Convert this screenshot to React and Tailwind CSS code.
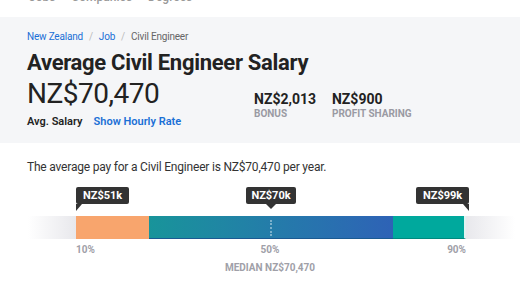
export default function App() {
  return (
    <div className="w-[520px] h-[290px] overflow-hidden bg-white text-[#222]" style={{ fontFamily: 'Roboto, "Liberation Sans", sans-serif' }}>
      {/* Top nav, cut off */}
      <div className="h-[17px] overflow-hidden bg-white">
        <div className="flex gap-[16px] pl-[29px] -mt-[9px] text-[12px] leading-[13px] font-medium text-[#999]">
          <span>Jobs</span>
          <span>Companies</span>
          <span>Degrees</span>
        </div>
      </div>

      {/* Header */}
      <div className="h-[126px] bg-[#f5f6f8] px-[27px] pt-[13px]">
        <div className="flex items-center gap-[6px] text-[10px] leading-[14px] tracking-[-0.2px]">
          <span className="text-[#1a6fd6]">New Zealand</span>
          <span className="text-[#bbb]">/</span>
          <span className="text-[#1a6fd6]">Job</span>
          <span className="text-[#bbb]">/</span>
          <span className="text-[#666]">Civil Engineer</span>
        </div>
        <h1 className="mt-[6px] text-[22px] leading-[26px] font-bold tracking-[-0.3px] text-[#222]">Average Civil Engineer Salary</h1>
        <div className="flex items-end">
          <div className="w-[227px] shrink-0">
            <div className="mt-[1px] text-[28px] leading-[34px] tracking-[-0.5px] text-[#222]">NZ$70,470</div>
            <div className="mt-[3px] flex gap-[11px] text-[11px] leading-[16px] font-semibold">
              <span className="text-[#222]">Avg. Salary</span>
              <span className="text-[#1a6fd6]">Show Hourly Rate</span>
            </div>
          </div>
          <div className="mb-[10px] flex gap-[16px]">
            <div>
              <div className="text-[14px] leading-[16px] font-bold text-[#222]">NZ$2,013</div>
              <div className="text-[10px] leading-[13px] font-bold text-[#9a9aa3]">BONUS</div>
            </div>
            <div>
              <div className="text-[14px] leading-[16px] font-bold text-[#222]">NZ$900</div>
              <div className="text-[10px] leading-[13px] font-bold text-[#9a9aa3]">PROFIT SHARING</div>
            </div>
          </div>
        </div>
      </div>

      {/* Distribution */}
      <div className="pt-[16px]">
        <p className="pl-[27px] text-[12px] leading-[16px] tracking-[-0.2px] text-[#333]">
          The average pay for a Civil Engineer is NZ$70,470 per year.
        </p>

        <div className="relative mt-[41px] ml-[28px] flex h-[23px] w-[487px]">
          <div className="w-[48px] bg-gradient-to-r from-white to-[#e8e8ec]" />
          <div className="w-[73px] bg-[#f8a56d]" />
          <div className="w-[244px] bg-gradient-to-r from-[#18949a] to-[#2e62b6] border-b border-[#1b5a92]" />
          <div className="w-[73px] bg-[#00a99d] border-b border-[#00897f] border-r-2 border-r-[#dff3f1]" />
          <div className="w-[49px] bg-gradient-to-r from-[#e8e8ec] to-white" />
          <div className="absolute left-[242px] top-[4px] h-[16px] border-l-2 border-dotted border-white/40" />

          {/* Tooltips */}
          <div className="absolute left-[48px] -top-[29px] rounded-[2px] bg-[#333] px-[7px] text-[11px] leading-[17px] font-bold text-white">
            NZ$51k
            <span className="absolute left-0 top-full h-0 w-0 border-t-[7px] border-r-[6px] border-t-[#333] border-r-transparent" />
          </div>
          <div className="absolute left-[218px] -top-[29px] w-[50px] rounded-[2px] bg-[#333] text-center text-[11px] leading-[17px] font-bold text-white">
            NZ$70k
            <span className="absolute left-[20px] top-full h-0 w-0 border-t-[5px] border-x-[5px] border-t-[#333] border-x-transparent" />
          </div>
          <div className="absolute left-[388px] -top-[29px] rounded-[2px] bg-[#333] px-[7px] text-[11px] leading-[17px] font-bold text-white">
            NZ$99k
            <span className="absolute right-0 top-full h-0 w-0 border-t-[7px] border-l-[6px] border-t-[#333] border-l-transparent" />
          </div>
        </div>

        <div className="relative ml-[28px] mt-[4px] h-[14px] w-[487px] text-[10px] leading-[14px] font-bold text-[#a0a0a8]">
          <span className="absolute left-[48px]">10%</span>
          <span className="absolute left-[242px] -translate-x-1/2">50%</span>
          <span className="absolute right-[49px]">90%</span>
        </div>
        <div className="ml-[28px] mt-[4px] w-[487px] text-[10px] leading-[14px] font-bold text-[#a0a0a8]">
          <div className="ml-[242px] w-0 flex justify-center whitespace-nowrap">MEDIAN NZ$70,470</div>
        </div>
      </div>
    </div>
  );
}
